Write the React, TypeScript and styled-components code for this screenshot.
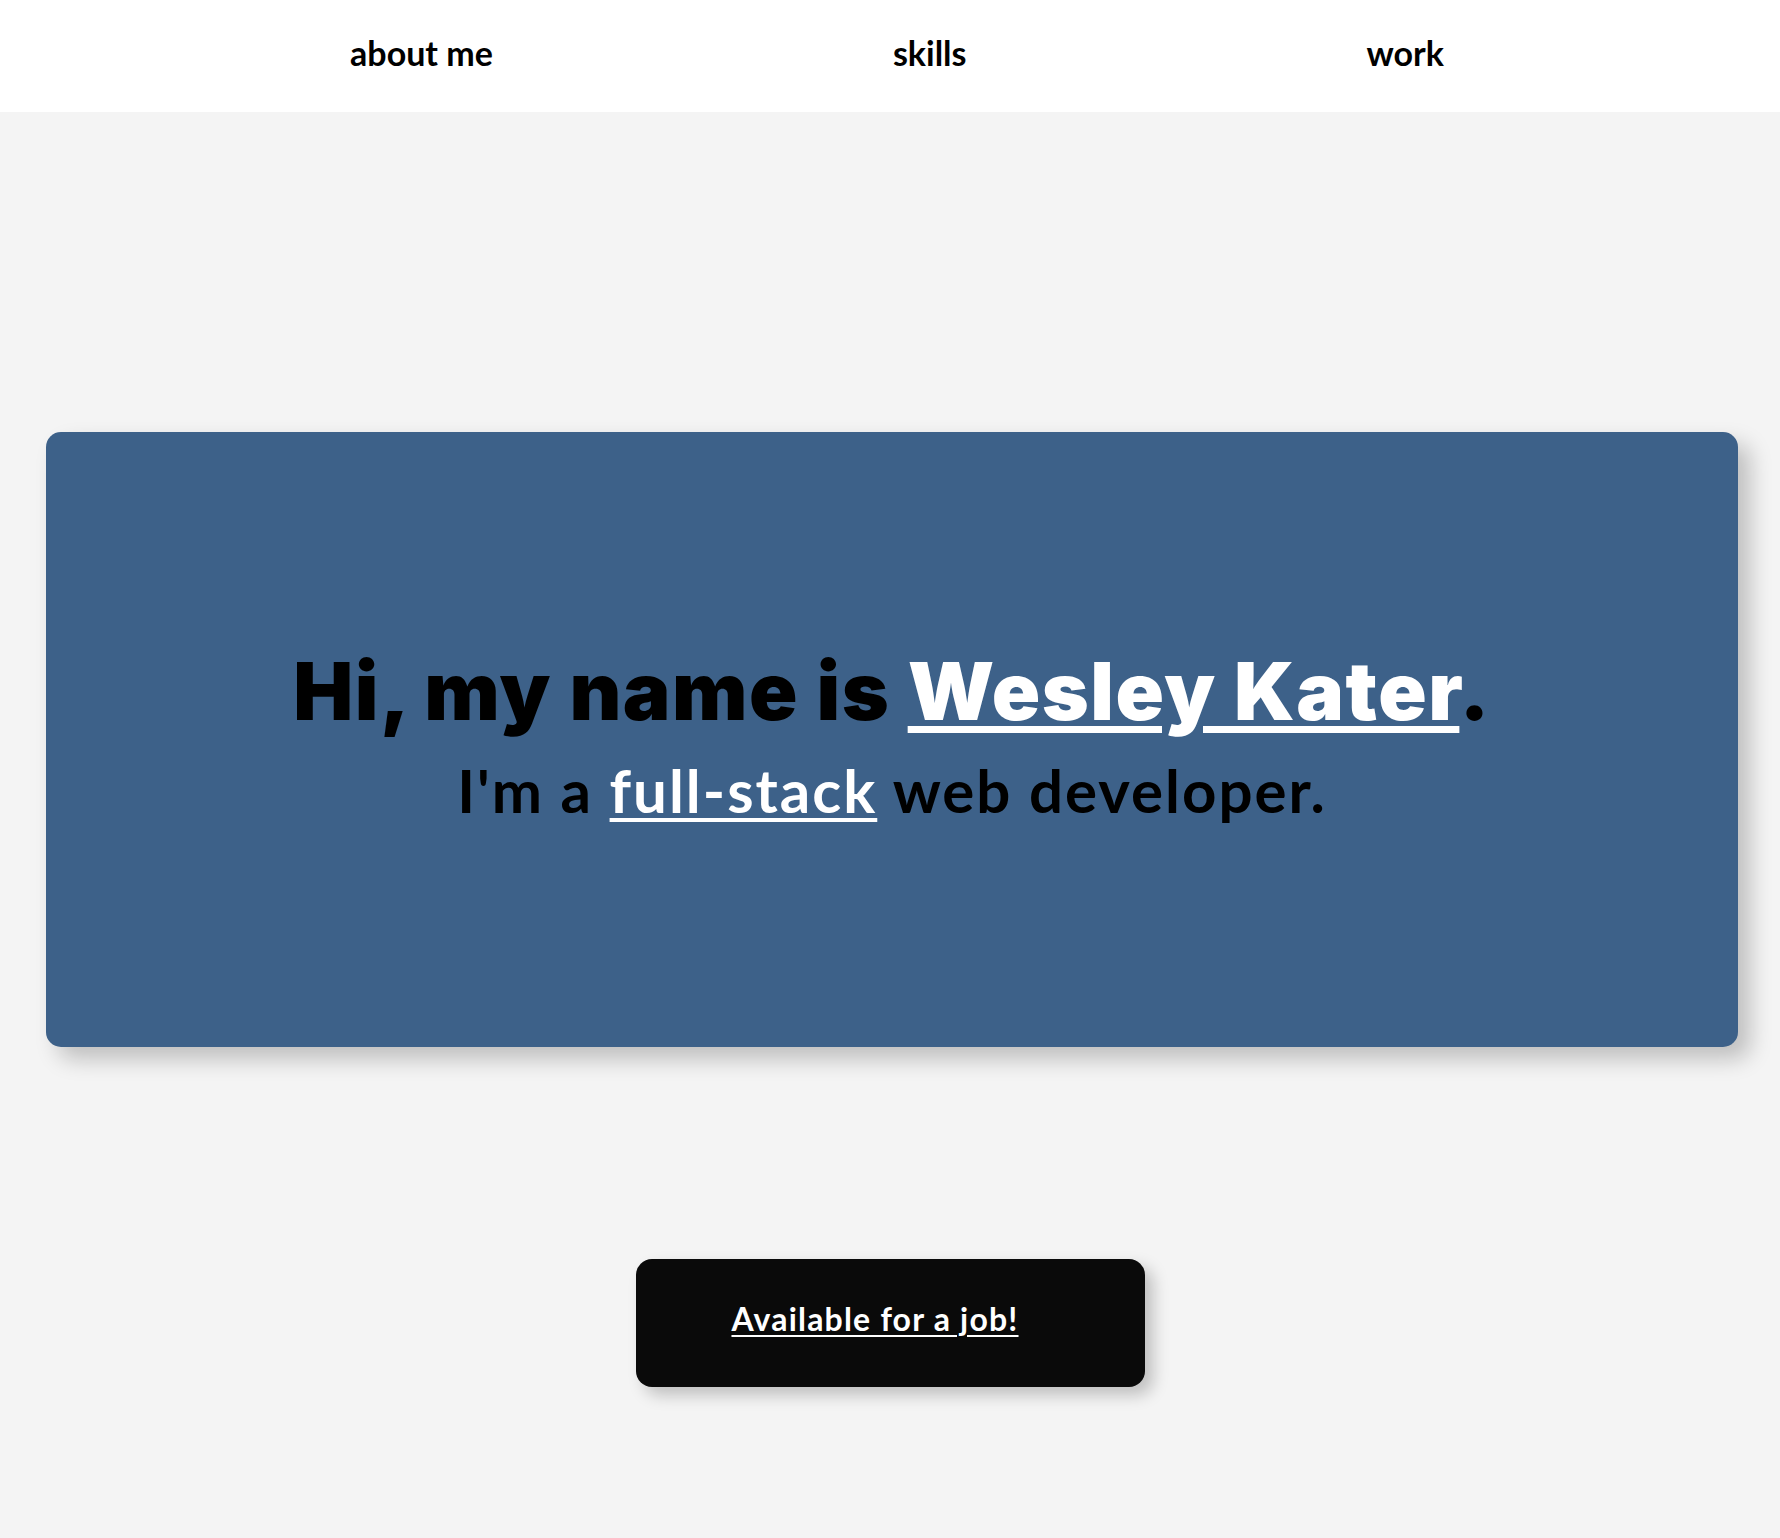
import React from "react";
import styled, { createGlobalStyle } from "styled-components";

const Global = createGlobalStyle`
  html, body { margin: 0; padding: 0; }
  body {
    background: #f4f4f4;
    font-family: "Lato", "Liberation Sans", sans-serif;
    color: #000;
  }
`;

const NavBar = styled.nav`
  height: 112px;
  background: #ffffff;
  display: flex;
  align-items: center;
  justify-content: center;
  gap: 400px;
  padding-left: 14px;
`;

const NavLink = styled.a`
  font-family: "Lato", sans-serif;
  font-weight: 700;
  font-size: 34px;
  color: #000;
  text-decoration: none;
  padding-bottom: 8px;
`;

const Main = styled.main`
  display: flex;
  flex-direction: column;
  align-items: center;
  padding-top: 320px;
  padding-bottom: 151px;
`;

const Card = styled.section`
  align-self: flex-start;
  margin-left: 46px;
  width: 1692px;
  height: 615px;
  box-sizing: border-box;
  background: #3d6189;
  border-radius: 15px;
  box-shadow: 12px 12px 22px rgba(0, 0, 0, 0.22);
  display: flex;
  flex-direction: column;
  align-items: center;
  justify-content: center;
  padding-bottom: 14px;
`;

const Heading = styled.h1`
  margin: 0 0 18px;
  font-family: "Inter", sans-serif;
  font-weight: 900;
  font-size: 80px;
  letter-spacing: 1.5px;
  line-height: 1.2;
  color: #000;
`;

const Sub = styled.h2`
  margin: 0;
  font-family: "Lato", sans-serif;
  font-weight: 700;
  font-size: 60px;
  letter-spacing: 2px;
  line-height: 1.1;
  color: #000;
`;

const Highlight = styled.a<{ $thick: number; $offset: number }>`
  color: #ffffff;
  text-decoration: underline;
  text-decoration-thickness: ${(p) => p.$thick}px;
  text-underline-offset: ${(p) => p.$offset}px;
  text-decoration-skip-ink: auto;
`;

const JobButton = styled.a`
  margin-top: 212px;
  width: 509px;
  height: 128px;
  box-sizing: border-box;
  background: #0a0a0a;
  border-radius: 16px;
  box-shadow: 8px 8px 16px rgba(0, 0, 0, 0.22);
  display: flex;
  align-items: center;
  justify-content: center;
  padding: 0 30px 10px 0;
  font-family: "Lato", sans-serif;
  font-weight: 700;
  font-size: 32px;
  letter-spacing: 1.2px;
  color: #ffffff;
  text-decoration: underline;
  text-decoration-thickness: 2px;
  text-underline-offset: 4px;
`;

export default function App() {
  return (
    <>
      <Global />
      <NavBar>
        <NavLink href="#about">about me</NavLink>
        <NavLink href="#skills">skills</NavLink>
        <NavLink href="#work">work</NavLink>
      </NavBar>
      <Main>
        <Card>
          <Heading>
            Hi, my name is{" "}
            <Highlight href="#about" $thick={7} $offset={6}>
              Wesley Kater
            </Highlight>
            .
          </Heading>
          <Sub>
            I'm a{" "}
            <Highlight href="#skills" $thick={4} $offset={5}>
              full-stack
            </Highlight>{" "}
            web developer.
          </Sub>
        </Card>
        <JobButton href="#contact">Available for a job!</JobButton>
      </Main>
    </>
  );
}
